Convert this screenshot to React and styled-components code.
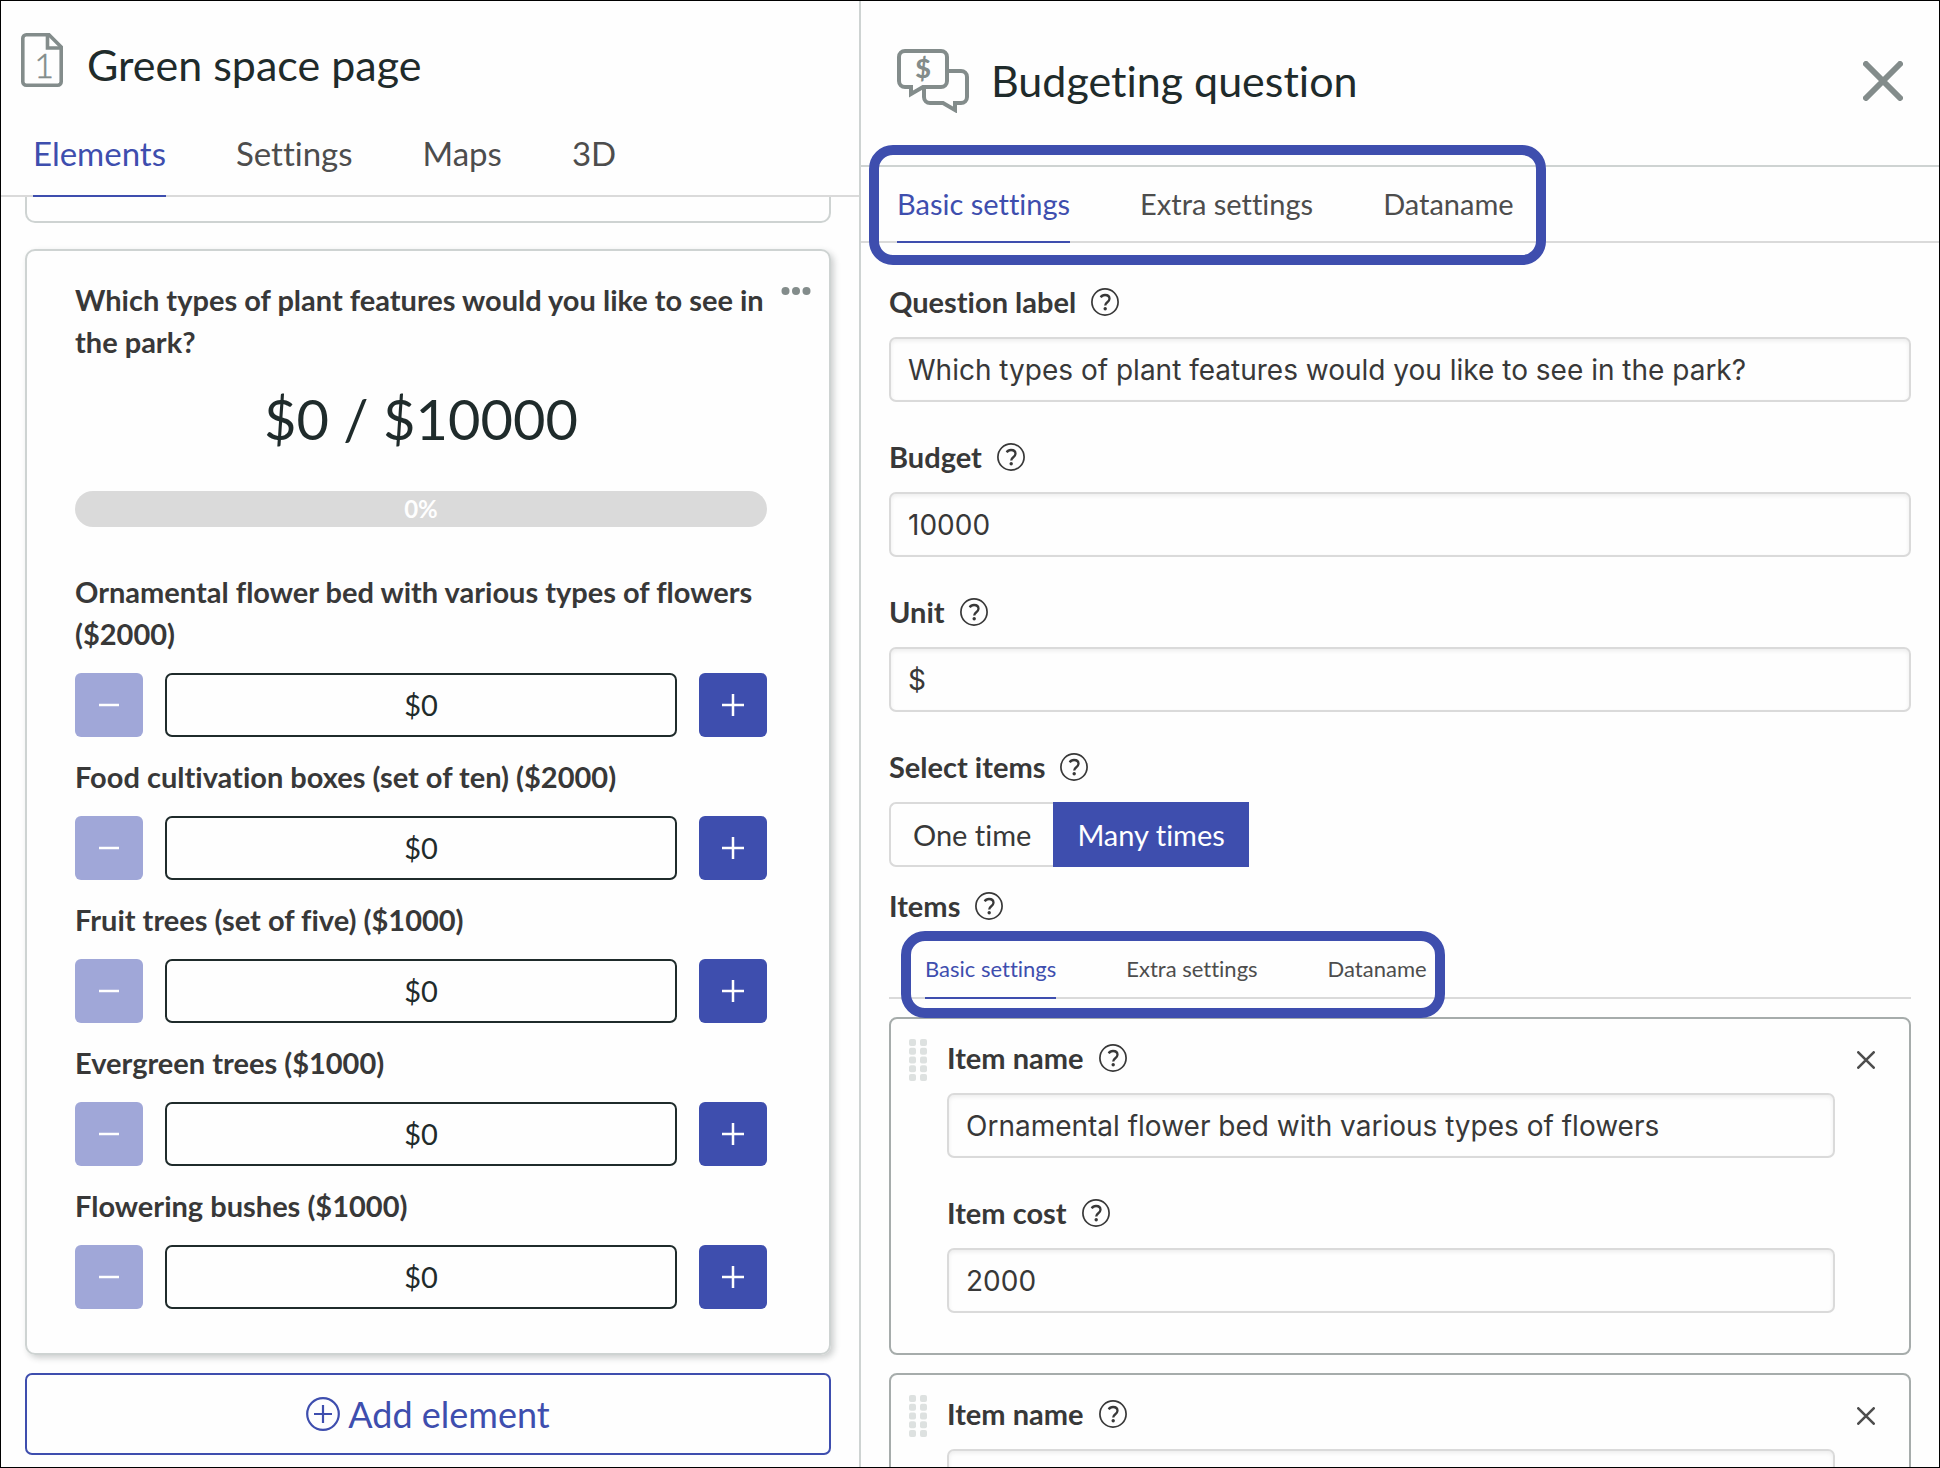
import React, { useId, useState } from "react";
import styled, { createGlobalStyle, css } from "styled-components";

const color = {
  blue: "#3e4eae",
  blueMuted: "#a0a7d8",
  ink: "#1f2b2b",
  text: "#383838",
  tab: "#4d4d4d",
  icon: "#838c8b",
  line: "#dadada",
  cardLine: "#ced3d2",
  itemLine: "#a6acab",
  handle: "#dde1e0",
  paper: "#fefefe",
};

const GlobalStyle = createGlobalStyle`
  *, *::before, *::after { box-sizing: border-box; }
  body {
    margin: 0;
    background: ${color.paper};
    color: ${color.text};
    font-family: Lato, "Liberation Sans", sans-serif;
    font-size: 28px;
    font-variant-ligatures: none;
  }
  button, input { font: inherit; font-variant-ligatures: none; color: inherit; margin: 0; }
  button { cursor: pointer; padding: 0; border: 0; background: none; }
  svg { display: block; flex: none; }
`;

const Frame = styled.div`
  display: grid;
  grid-template-columns: minmax(0, 860fr) minmax(0, 1078fr);
  height: 100vh;
  overflow: hidden;
  border: 1px solid #000;
`;

const PagePanel = styled.section`
  display: flex;
  flex-direction: column;
  min-height: 0;
  border-right: 2px solid ${color.cardLine};
`;

const QuestionPanel = styled.section`
  display: flex;
  flex-direction: column;
  min-height: 0;
  overflow: hidden;
`;

const PageHeader = styled.header`
  display: flex;
  align-items: flex-end;
  gap: 24px;
  padding: 32px 20px 0;
`;

const QuestionHeader = styled.header`
  display: flex;
  align-items: center;
  gap: 22px;
  padding: 48px 36px 52px;
  border-bottom: 2px solid ${color.cardLine};
`;

const Title = styled.h1`
  margin: 0;
  flex: 1;
  font-size: 43px;
  line-height: 44px;
  font-weight: 400;
  color: ${color.ink};
`;

const tabSizes = {
  large: css`
    margin-top: 46px;
    padding-left: 32px;
    --tab-font: 33px;
    --tab-line: 40px;
    --tab-pad: 22px;
    --tab-gap: 70px;
  `,
  medium: css`
    padding: 20px 0 0 36px;
    --tab-font: 29px;
    --tab-line: 34px;
    --tab-pad: 20px;
    --tab-gap: 70px;
  `,
  small: css`
    margin: 33px 0 18px;
    padding-left: 36px;
    --tab-font: 22px;
    --tab-line: 26px;
    --tab-pad: 15px;
    --tab-gap: 70px;
  `,
};

const TabBar = styled.nav`
  flex: none;
  border-bottom: 2px solid ${color.line};
  ${(p) => tabSizes[p.$size]}
`;

const TabGroup = styled.div`
  position: relative;
  display: inline-flex;
  vertical-align: top;
  gap: var(--tab-gap);
  margin-bottom: -2px;
  ${(p) =>
    p.$highlight &&
    css`
      &::after {
        content: "";
        position: absolute;
        inset: ${p.$highlight};
        border: 10px solid ${color.blue};
        border-radius: 24px;
        pointer-events: none;
        z-index: 1;
      }
    `}
`;

const Tab = styled.button`
  font-size: var(--tab-font);
  line-height: var(--tab-line);
  padding-bottom: var(--tab-pad);
  white-space: nowrap;
  color: ${(p) => (p.$active ? color.blue : color.tab)};
  border-bottom: 2px solid ${(p) => (p.$active ? color.blue : "transparent")};
`;

const ElementList = styled.div`
  display: flex;
  flex-direction: column;
  padding: 0 28px 12px 24px;
`;

const PreviousCard = styled.div`
  height: 26px;
  margin-bottom: 26px;
  border: 2px solid ${color.cardLine};
  border-top: 0;
  border-radius: 0 0 10px 10px;
`;

const PreviewCard = styled.article`
  position: relative;
  padding: 28px 62px 44px 48px;
  margin-bottom: 18px;
  border: 2px solid ${color.cardLine};
  border-radius: 10px;
  box-shadow: 3px 3px 6px rgba(31, 43, 43, 0.22);
`;

const MoreButton = styled.button`
  position: absolute;
  top: 28px;
  right: 18px;
  height: 24px;
`;

const Question = styled.h2`
  margin: 0;
  font-size: 29px;
  line-height: 42px;
  font-weight: 700;
`;

const Total = styled.p`
  margin: 14px 0 30px;
  font-size: 56px;
  line-height: 84px;
  text-align: center;
  color: ${color.ink};
`;

const Progress = styled.div`
  height: 36px;
  margin-bottom: 44px;
  border-radius: 18px;
  background: ${color.line};
  color: ${color.paper};
  font-size: 24px;
  line-height: 36px;
  font-weight: 700;
  text-align: center;
`;

const Choices = styled.div`
  display: flex;
  flex-direction: column;
  gap: 19px;
`;

const ChoiceLabel = styled.label`
  display: block;
  margin-bottom: 18px;
  font-size: 29px;
  line-height: 42px;
  font-weight: 700;
`;

const Counter = styled.div`
  display: flex;
  gap: 22px;
  height: 64px;
`;

const StepButton = styled.button`
  display: grid;
  place-items: center;
  flex: none;
  width: 68px;
  border-radius: 6px;
  color: #fff;
  background: ${color.blue};
  &:disabled {
    background: ${color.blueMuted};
  }
`;

const CounterField = styled.input`
  flex: 1;
  min-width: 0;
  padding: 0 0 2px;
  border: 2px solid ${color.ink};
  border-radius: 7px;
  background: ${color.paper};
  color: ${color.ink};
  font-size: 29px;
  text-align: center;
`;

const AddButton = styled.button`
  display: flex;
  align-items: center;
  justify-content: center;
  gap: 8px;
  height: 82px;
  border: 2px solid ${color.blue};
  border-radius: 7px;
  color: ${color.blue};
  font-size: 36px;
`;

const Form = styled.form`
  padding: 42px 28px 0;
`;

const FieldBlock = styled.div`
  margin-bottom: ${(p) => (p.$last ? "0" : "38px")};
`;

const LabelRow = styled.div`
  display: flex;
  align-items: center;
  gap: 15px;
  margin-bottom: ${(p) => (p.$flush ? "0" : "18px")};
  font-size: 29px;
  line-height: 34px;
  font-weight: 700;
`;

const HelpButton = styled.button`
  border-radius: 50%;
`;

const TextInput = styled.input`
  display: block;
  width: 100%;
  height: 65px;
  padding: 0 17px;
  border: 2px solid ${color.line};
  border-radius: 7px;
  background: ${color.paper};
  box-shadow: inset 0 2px 4px rgba(0, 0, 0, 0.07);
  font-family: Inter, "Liberation Sans", sans-serif;
`;

const Segmented = styled.div`
  display: flex;
  height: 65px;
  margin-bottom: 22px;
`;

const Segment = styled.button`
  padding: 0 22px;
  border: 2px solid ${(p) => (p.$active ? color.blue : color.line)};
  border-right-width: ${(p) => (p.$active ? "2px" : "0")};
  border-radius: ${(p) => (p.$active ? "0" : "7px 0 0 7px")};
  background: ${(p) => (p.$active ? color.blue : color.paper)};
  color: ${(p) => (p.$active ? "#fff" : color.text)};
  font-size: 29px;
`;

const ItemCard = styled.fieldset`
  display: grid;
  grid-template-columns: 18px minmax(0, 1fr) 18px;
  align-items: start;
  min-width: 0;
  margin: 0 0 18px;
  padding: 20px 34px 40px 18px;
  border: 2px solid ${color.itemLine};
  border-radius: 8px;
`;

const ItemFields = styled.div`
  padding: 2px 22px 0 20px;
`;

const RemoveButton = styled.button`
  height: 42px;
`;

const PageIcon = () => (
  <svg width="42" height="54" viewBox="0 0 42 54" fill="none" stroke={color.icon} strokeWidth="3.600">
    <path d="M28 1.800H5.300a3.500 3.500 0 0 0-3.500 3.500v43.400a3.500 3.500 0 0 0 3.500 3.500h31.400a3.500 3.500 0 0 0 3.500-3.500V14z" />
    <path d="M26.500 2v13h13.500" />
    <text x="23" y="45" fontSize="34" fontWeight="300" textAnchor="middle" fill={color.icon} stroke={color.icon} strokeWidth="0.500">
      1
    </text>
  </svg>
);

const BudgetIcon = () => (
  <svg width="72" height="64" viewBox="0 0 72 64" fill="none" stroke={color.icon} strokeWidth="4">
    <path d="M8 2h36a6 6 0 0 1 6 6v24a6 6 0 0 1-6 6H26L14 45V38H8a6 6 0 0 1-6-6V8a6 6 0 0 1 6-6z" />
    <path d="M52 22h12a6 6 0 0 1 6 6v20a6 6 0 0 1-6 6h-6v7L46 54H33a6 6 0 0 1-6-6v-8" />
    <text x="26" y="29" fontSize="27" fontWeight="900" textAnchor="middle" fill={color.icon} stroke="none">
      $
    </text>
  </svg>
);

const CrossIcon = ({ size, stroke, tint }) => (
  <svg width={size} height={size} viewBox={`0 0 ${size} ${size}`} stroke={tint} strokeWidth={stroke} strokeLinecap="round">
    <path
      d={`M${stroke / 2} ${stroke / 2}L${size - stroke / 2} ${size - stroke / 2}M${size - stroke / 2} ${stroke / 2}L${stroke / 2} ${size - stroke / 2}`}
    />
  </svg>
);

const MoreIcon = () => (
  <svg width="30" height="8" viewBox="0 0 30 8" fill={color.icon}>
    <circle cx="4.500" cy="4" r="4" />
    <circle cx="15" cy="4" r="4" />
    <circle cx="25.500" cy="4" r="4" />
  </svg>
);

const MinusIcon = () => (
  <svg width="22" height="22" viewBox="0 0 22 22" stroke="currentColor" strokeWidth="2.500">
    <path d="M1 11h20" />
  </svg>
);

const PlusIcon = () => (
  <svg width="22" height="22" viewBox="0 0 22 22" stroke="currentColor" strokeWidth="2.500">
    <path d="M0 11h22M11 0v22" />
  </svg>
);

const CirclePlusIcon = () => (
  <svg width="34" height="34" viewBox="0 0 34 34" fill="none" stroke="currentColor" strokeWidth="2.200">
    <circle cx="17" cy="17" r="15.800" />
    <path d="M8 17h18M17 8v18" />
  </svg>
);

const HelpIcon = () => (
  <svg width="28" height="28" viewBox="0 0 28 28" fill="none" stroke={color.text} strokeWidth="1.700">
    <circle cx="14" cy="14" r="13.100" />
    <path d="M9.700 9.300C10.700 7.600 12.200 7 14 7c2.700 0 4.500 1.500 4.500 3.800 0 3.500-4.300 3.400-4.300 6.700" strokeWidth="2.300" />
    <circle cx="14.200" cy="20.700" r="1.700" fill={color.text} stroke="none" />
  </svg>
);

const HandleIcon = () => (
  <svg width="18" height="42" viewBox="0 0 18 42" fill={color.handle}>
    {[0, 1, 2, 3, 4].map((row) =>
      [0, 11].map((x) => <rect key={`${row}-${x}`} x={x} y={row * 8.750} width="7" height="7" rx="2" />)
    )}
  </svg>
);

function Tabs({ size, labels, highlight, name }) {
  const [active, setActive] = useState(0);
  return (
    <TabBar $size={size} aria-label={name}>
      <TabGroup role="tablist" $highlight={highlight}>
        {labels.map((label, i) => (
          <Tab
            key={label}
            type="button"
            role="tab"
            aria-selected={i === active}
            $active={i === active}
            onClick={() => setActive(i)}
          >
            {label}
          </Tab>
        ))}
      </TabGroup>
    </TabBar>
  );
}

function Help({ topic }) {
  return (
    <HelpButton type="button" aria-label={`Help: ${topic}`}>
      <HelpIcon />
    </HelpButton>
  );
}

function Field({ label, value, last }) {
  const id = useId();
  return (
    <FieldBlock $last={last}>
      <LabelRow>
        <label htmlFor={id}>{label}</label>
        <Help topic={label} />
      </LabelRow>
      <TextInput id={id} type="text" defaultValue={value} />
    </FieldBlock>
  );
}

function Choice({ name, price }) {
  const id = useId();
  const [amount, setAmount] = useState(0);
  return (
    <div>
      <ChoiceLabel htmlFor={id}>{`${name} ($${price})`}</ChoiceLabel>
      <Counter>
        <StepButton type="button" aria-label="Remove" disabled={amount === 0} onClick={() => setAmount(amount - price)}>
          <MinusIcon />
        </StepButton>
        <CounterField id={id} type="text" readOnly value={`$${amount}`} />
        <StepButton type="button" aria-label="Add" onClick={() => setAmount(amount + price)}>
          <PlusIcon />
        </StepButton>
      </Counter>
    </div>
  );
}

function Item({ name, cost }) {
  const hasCost = cost !== undefined;
  return (
    <ItemCard>
      <HandleIcon />
      <ItemFields>
        <Field label="Item name" value={name} last={!hasCost} />
        {hasCost && <Field label="Item cost" value={cost} last />}
      </ItemFields>
      <RemoveButton type="button" aria-label="Remove item">
        <CrossIcon size={18} stroke={2.6} tint={color.tab} />
      </RemoveButton>
    </ItemCard>
  );
}

const choices = [
  { name: "Ornamental flower bed with various types of flowers", price: 2000 },
  { name: "Food cultivation boxes (set of ten)", price: 2000 },
  { name: "Fruit trees (set of five)", price: 1000 },
  { name: "Evergreen trees", price: 1000 },
  { name: "Flowering bushes", price: 1000 },
];

const question = "Which types of plant features would you like to see in the park?";
const settingTabs = ["Basic settings", "Extra settings", "Dataname"];

export default function App() {
  const [mode, setMode] = useState("Many times");
  return (
    <>
      <GlobalStyle />
      <Frame>
        <PagePanel>
          <PageHeader>
            <PageIcon />
            <Title>Green space page</Title>
          </PageHeader>
          <Tabs size="large" name="Page" labels={["Elements", "Settings", "Maps", "3D"]} />
          <ElementList>
            <PreviousCard />
            <PreviewCard>
              <MoreButton type="button" aria-label="More">
                <MoreIcon />
              </MoreButton>
              <Question>{question}</Question>
              <Total>$0 / $10000</Total>
              <Progress role="progressbar" aria-label="Budget used" aria-valuenow={0}>
                0%
              </Progress>
              <Choices>
                {choices.map((choice) => (
                  <Choice key={choice.name} {...choice} />
                ))}
              </Choices>
            </PreviewCard>
            <AddButton type="button">
              <CirclePlusIcon />
              Add element
            </AddButton>
          </ElementList>
        </PagePanel>

        <QuestionPanel>
          <QuestionHeader>
            <BudgetIcon />
            <Title as="h2">Budgeting question</Title>
            <button type="button" aria-label="Close">
              <CrossIcon size={40} stroke={6} tint={color.icon} />
            </button>
          </QuestionHeader>
          <Tabs size="medium" name="Question" labels={settingTabs} highlight="-42px -32px -22px -28px" />
          <Form>
            <Field label="Question label" value={question} />
            <Field label="Budget" value="10000" />
            <Field label="Unit" value="$" />
            <LabelRow>
              <span>Select items</span>
              <Help topic="Select items" />
            </LabelRow>
            <Segmented>
              {["One time", "Many times"].map((label) => (
                <Segment
                  key={label}
                  type="button"
                  aria-pressed={mode === label}
                  $active={mode === label}
                  onClick={() => setMode(label)}
                >
                  {label}
                </Segment>
              ))}
            </Segmented>
            <LabelRow $flush>
              <span>Items</span>
              <Help topic="Items" />
            </LabelRow>
            <Tabs size="small" name="Items" labels={settingTabs} highlight="-25px -18px -19px -24px" />
            <Item name="Ornamental flower bed with various types of flowers" cost="2000" />
            <Item name="" />
          </Form>
        </QuestionPanel>
      </Frame>
    </>
  );
}
